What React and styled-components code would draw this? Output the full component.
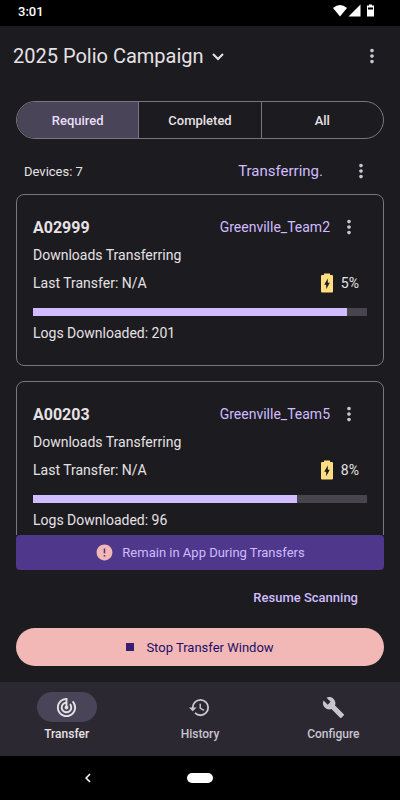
import React, { useState } from 'react'
import styled, { createGlobalStyle } from 'styled-components'
import { MdMoreVert, MdTrackChanges, MdHistory, MdBuild, MdError, MdExpandMore, MdChevronLeft } from 'react-icons/md'

const devices = [
  { id: 'A02999', team: 'Greenville_Team2', battery: 5, progress: 94, logs: 201 },
  { id: 'A00203', team: 'Greenville_Team5', battery: 8, progress: 79, logs: 96 },
]

const filters = ['Required', 'Completed', 'All']

const pages = [
  { label: 'Transfer', icon: MdTrackChanges },
  { label: 'History', icon: MdHistory },
  { label: 'Configure', icon: MdBuild },
]

function StatusIcons() {
  return (
    <svg width="42" height="14" viewBox="0 0 42 14" fill="#fff" aria-hidden="true">
      <path d="M0 4Q7 -2 14 4L7 12.5Z" />
      <path d="M27.500 0.500V12.500H15.500Z" />
      <path d="M36 0.500H39V1.500H41V12.500H34V1.500H36Z" />
      <path d="M35 3.500H40V5.500H35Z" fill="#000" />
    </svg>
  )
}

function BatteryIcon() {
  return (
    <svg width="12" height="20" viewBox="0 0 12 20" aria-hidden="true">
      <path d="M3 0.500H9V2H11Q12 2 12 3V18.500Q12 19.500 11 19.500H1Q0 19.500 0 18.500V3Q0 2 1 2H3Z" fill="#ffdd80" />
      <path d="M6.800 5.500V9.800H8.800L5.200 16.200V11.800H3.200Z" fill="#1c1b1f" />
    </svg>
  )
}

function DeviceCard({ device }) {
  return (
    <Card>
      <CardHeader>
        <DeviceName>{device.id}</DeviceName>
        <Team>{device.team}</Team>
        <IconButton aria-label={`Options for ${device.id}`}><MdMoreVert size={22} /></IconButton>
      </CardHeader>
      <Line>Downloads Transferring</Line>
      <Line>
        <span>Last Transfer: N/A</span>
        <Battery>
          <BatteryIcon />
          <span>{device.battery}%</span>
        </Battery>
      </Line>
      <Track role="progressbar" aria-label="Download progress" aria-valuenow={device.progress}>
        <Bar style={{ width: `${device.progress}%` }} />
      </Track>
      <Line>Logs Downloaded: {device.logs}</Line>
    </Card>
  )
}

export default function App() {
  const [filter, setFilter] = useState('Required')

  return (
    <Screen>
      <GlobalStyle />
      <StatusBar>
        <span>3:01</span>
        <StatusIcons />
      </StatusBar>
      <Header>
        <CampaignButton>
          2025 Polio Campaign
          <Chevron viewBox="0 0 12 12" aria-hidden="true"><path d="M1 4L6 9L11 4" /></Chevron>
        </CampaignButton>
        <IconButton aria-label="Menu"><MdMoreVert size={22} /></IconButton>
      </Header>
      <Main>
        <Filters>
          {filters.map(name => (
            <Filter key={name} $active={name === filter} onClick={() => setFilter(name)}>{name}</Filter>
          ))}
        </Filters>
        <Summary>
          <span>Devices: 7</span>
          <Status>Transferring.</Status>
          <IconButton aria-label="List options"><MdMoreVert size={22} /></IconButton>
        </Summary>
        <List>
          {devices.map(device => <DeviceCard key={device.id} device={device} />)}
        </List>
        <Notice>
          <MdError size={19} color="#f2b8b5" />
          Remain in App During Transfers
        </Notice>
        <ResumeButton>Resume Scanning</ResumeButton>
        <StopButton>
          <StopIcon />
          Stop Transfer Window
        </StopButton>
      </Main>
      <Nav>
        {pages.map(({ label, icon: Icon }, i) => (
          <NavLink key={label} href={`#${label.toLowerCase()}`} $active={i === 0}>
            <NavIcon $active={i === 0}><Icon size={23} /></NavIcon>
            {label}
          </NavLink>
        ))}
      </Nav>
      <SystemBar>
        <BackButton aria-label="Back"><MdChevronLeft size={18} /></BackButton>
        <HomeButton aria-label="Home" />
      </SystemBar>
    </Screen>
  )
}

const GlobalStyle = createGlobalStyle`
  * {
    box-sizing: border-box;
  }

  body {
    margin: 0;
    background: #1c1b1f;
    color: #e6e1e5;
    font-family: Roboto, sans-serif;
    font-size: 14px;
  }

  button {
    padding: 0;
    border: 0;
    background: none;
    color: inherit;
    font: inherit;
    cursor: pointer;
  }

  svg {
    display: block;
    flex-shrink: 0;
  }
`

const Screen = styled.div`
  display: flex;
  flex-direction: column;
  height: 100vh;
`

const StatusBar = styled.div`
  display: flex;
  align-items: center;
  justify-content: space-between;
  padding: 0 25px 4px 18px;
  height: 26px;
  background: #000;
  color: #fff;
  font-size: 13px;
  font-weight: 500;
`

const Header = styled.header`
  display: flex;
  align-items: center;
  justify-content: space-between;
  padding: 0 17px 0 13px;
  height: 60px;
`

const CampaignButton = styled.button`
  display: flex;
  align-items: center;
  gap: 8px;
  font-size: 20px;
`

const Chevron = styled.svg`
  width: 12px;
  height: 12px;
  fill: none;
  stroke: currentColor;
  stroke-width: 2px;
`

const IconButton = styled.button`
  display: flex;
  color: #cac4d0;
`

const Main = styled.main`
  display: flex;
  flex-direction: column;
  flex: 1;
  min-height: 0;
  padding: 15px 16px 16px;
`

const Filters = styled.div`
  display: flex;
  flex-shrink: 0;
  height: 38px;
  border: 1px solid #79767d;
  border-radius: 19px;
  overflow: hidden;
`

const Filter = styled.button`
  flex: 1;
  background: ${props => props.$active ? '#4a4458' : 'transparent'};
  color: ${props => props.$active ? '#e8def8' : '#e6e1e5'};
  font-size: 13px;
  font-weight: 500;

  & + & {
    border-left: 1px solid #79767d;
  }
`

const Summary = styled.div`
  display: flex;
  align-items: center;
  flex-shrink: 0;
  height: 46px;
  margin-top: 9px;
  padding: 0 12px 0 8px;
  font-size: 13px;
`

const Status = styled.span`
  margin-left: auto;
  margin-right: 27px;
  color: #d0bcff;
  font-size: 15px;
`

const List = styled.div`
  display: flex;
  flex-direction: column;
  flex: 1;
  gap: 15px;
  min-height: 0;
  overflow-y: auto;
  scrollbar-width: none;
`

const Card = styled.article`
  flex-shrink: 0;
  padding: 18px 16px;
  border: 1px solid #79767d;
  border-radius: 8px;
`

const CardHeader = styled.div`
  display: flex;
  align-items: center;
  height: 28px;
  padding-right: 7px;
`

const DeviceName = styled.h2`
  margin: 0;
  font-size: 16px;
  font-weight: 700;
`

const Team = styled.span`
  margin-left: auto;
  margin-right: 8px;
  color: #d0bcff;
`

const Line = styled.div`
  display: flex;
  align-items: center;
  justify-content: space-between;
  height: 28px;
`

const Battery = styled.div`
  display: flex;
  align-items: center;
  gap: 8px;
  padding-right: 8px;
`

const Track = styled.div`
  height: 8px;
  margin: 11px 0 3px;
  background: #49454f;
`

const Bar = styled.div`
  height: 100%;
  background: #d0bcff;
`

const Notice = styled.div`
  display: flex;
  align-items: center;
  justify-content: center;
  flex-shrink: 0;
  gap: 8px;
  height: 35px;
  border-radius: 4px;
  background: #4f378b;
  color: #d0bcff;
  font-size: 13px;
`

const ResumeButton = styled.button`
  align-self: flex-end;
  height: 38px;
  margin: 8px 26px 12px;
  color: #d0bcff;
  font-size: 13px;
  font-weight: 500;
`

const StopButton = styled.button`
  display: flex;
  align-items: center;
  justify-content: center;
  flex-shrink: 0;
  gap: 12px;
  height: 38px;
  border-radius: 19px;
  background: #f2b8b5;
  color: #1d0f69;
  font-size: 13px;
`

const StopIcon = styled.span`
  width: 8px;
  height: 8px;
  background: #381e72;
`

const Nav = styled.nav`
  display: flex;
  height: 74px;
  padding-top: 10px;
  background: #2b2831;
`

const NavLink = styled.a`
  display: flex;
  flex-direction: column;
  align-items: center;
  flex: 1;
  gap: 5px;
  color: ${props => props.$active ? '#e6e1e5' : '#cac4d0'};
  font-size: 12px;
  font-weight: 500;
  text-decoration: none;
`

const NavIcon = styled.span`
  display: flex;
  align-items: center;
  justify-content: center;
  width: 60px;
  height: 30px;
  border-radius: 15px;
  background: ${props => props.$active ? '#4a4458' : 'transparent'};
`

const SystemBar = styled.div`
  display: grid;
  grid-template-columns: 1fr 26px 1fr;
  align-items: center;
  height: 44px;
  background: #000;
  color: #fff;
`

const BackButton = styled.button`
  justify-self: center;
  margin-right: 12px;
`

const HomeButton = styled.button`
  && {
    height: 10px;
    border-radius: 5px;
    background: #fff;
  }
`
